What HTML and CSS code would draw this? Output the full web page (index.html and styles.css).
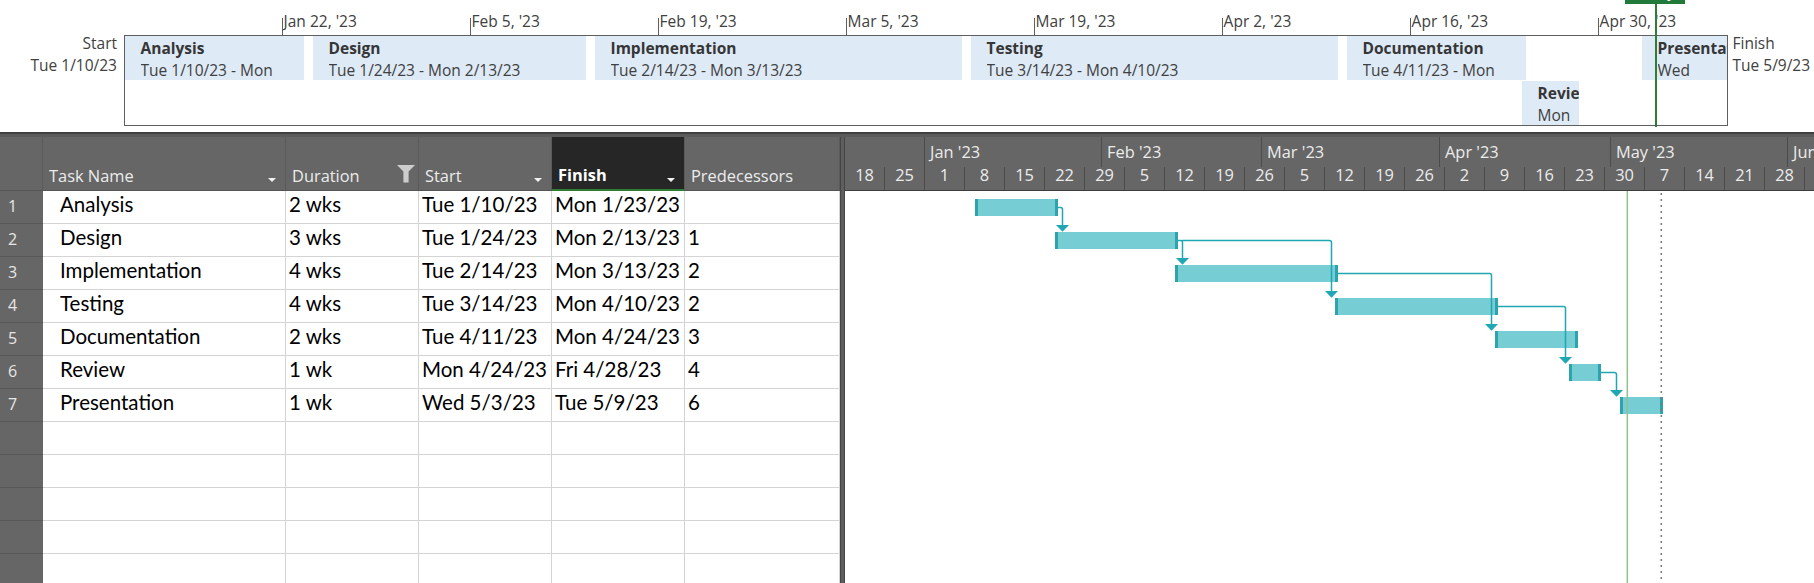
FILE: index.html
```html
<!DOCTYPE html>
<html lang="en">
<head>
<meta charset="utf-8">
<title>Project Gantt</title>
<link rel="stylesheet" href="styles.css">
</head>
<body>
<div class="app">
  <section class="timeline">
    <div class="tl-side tl-left"><div>Start</div><div>Tue 1/10/23</div></div>
    <div class="tl-box">
      <div class="tick" style="left:156.6px"><span>Jan 22, '23</span></div>
      <div class="tick" style="left:344.6px"><span>Feb 5, '23</span></div>
      <div class="tick" style="left:532.6px"><span>Feb 19, '23</span></div>
      <div class="tick" style="left:720.6px"><span>Mar 5, '23</span></div>
      <div class="tick" style="left:908.6px"><span>Mar 19, '23</span></div>
      <div class="tick" style="left:1096.6px"><span>Apr 2, '23</span></div>
      <div class="tick" style="left:1284.6px"><span>Apr 16, '23</span></div>
      <div class="tick" style="left:1472.6px"><span>Apr 30, '23</span></div>

      <div class="tl-block" style="left:0px;width:179px"><div class="tl-title">Analysis</div><div class="tl-dates">Tue 1/10/23 - Mon 1/23/23</div></div>
      <div class="tl-block" style="left:188px;width:273px"><div class="tl-title">Design</div><div class="tl-dates">Tue 1/24/23 - Mon 2/13/23</div></div>
      <div class="tl-block" style="left:470px;width:367px"><div class="tl-title">Implementation</div><div class="tl-dates">Tue 2/14/23 - Mon 3/13/23</div></div>
      <div class="tl-block" style="left:846px;width:367px"><div class="tl-title">Testing</div><div class="tl-dates">Tue 3/14/23 - Mon 4/10/23</div></div>
      <div class="tl-block" style="left:1222px;width:179px"><div class="tl-title">Documentation</div><div class="tl-dates">Tue 4/11/23 - Mon 4/24/23</div></div>
      <div class="tl-block lower" style="left:1397px;width:57px"><div class="tl-title">Review</div><div class="tl-dates">Mon 4/24/23 - Fri 4/28/23</div></div>
      <div class="tl-block" style="left:1517px;width:85px"><div class="tl-title">Presentation</div><div class="tl-dates">Wed 5/3/23 - Tue 5/9/23</div></div>
    </div>
    <div class="tl-side tl-right"><div>Finish</div><div>Tue 5/9/23</div></div>
    <div class="tl-today"><div class="tl-flag">Today</div></div>
  </section>

  <div class="splitter"></div>

  <section class="main">
    <div class="grid">
      <div class="hc rn"></div>
      <div class="hc"><span class="label">Task Name</span><span class="arrow"></span></div>
      <div class="hc dur"><span class="label">Duration</span>
        <svg class="filter" width="18" height="18" viewBox="0 0 18 18"><path d="M0 0H18L11.6 6.6V17.6H6.4V6.6Z"/></svg>
      </div>
      <div class="hc"><span class="label">Start</span><span class="arrow"></span></div>
      <div class="hc active"><span class="label">Finish</span><span class="arrow"></span></div>
      <div class="hc"><span class="label">Predecessors</span></div>

      <div class="rnc">1</div><div class="c name">Analysis</div><div class="c">2 wks</div><div class="c">Tue 1/10/23</div><div class="c">Mon 1/23/23</div><div class="c"></div>
      <div class="rnc">2</div><div class="c name">Design</div><div class="c">3 wks</div><div class="c">Tue 1/24/23</div><div class="c">Mon 2/13/23</div><div class="c">1</div>
      <div class="rnc">3</div><div class="c name">Implementation</div><div class="c">4 wks</div><div class="c">Tue 2/14/23</div><div class="c">Mon 3/13/23</div><div class="c">2</div>
      <div class="rnc">4</div><div class="c name">Testing</div><div class="c">4 wks</div><div class="c">Tue 3/14/23</div><div class="c">Mon 4/10/23</div><div class="c">2</div>
      <div class="rnc">5</div><div class="c name">Documentation</div><div class="c">2 wks</div><div class="c">Tue 4/11/23</div><div class="c">Mon 4/24/23</div><div class="c">3</div>
      <div class="rnc">6</div><div class="c name">Review</div><div class="c">1 wk</div><div class="c">Mon 4/24/23</div><div class="c">Fri 4/28/23</div><div class="c">4</div>
      <div class="rnc">7</div><div class="c name">Presentation</div><div class="c">1 wk</div><div class="c">Wed 5/3/23</div><div class="c">Tue 5/9/23</div><div class="c">6</div>
      <div class="rnc"></div><div class="c name"></div><div class="c"></div><div class="c"></div><div class="c"></div><div class="c"></div>
      <div class="rnc"></div><div class="c name"></div><div class="c"></div><div class="c"></div><div class="c"></div><div class="c"></div>
      <div class="rnc"></div><div class="c name"></div><div class="c"></div><div class="c"></div><div class="c"></div><div class="c"></div>
      <div class="rnc"></div><div class="c name"></div><div class="c"></div><div class="c"></div><div class="c"></div><div class="c"></div>
      <div class="rnc"></div><div class="c name"></div><div class="c"></div><div class="c"></div><div class="c"></div><div class="c"></div>
    </div>

    <div class="divider"></div>

    <div class="gantt">
      <div class="g-head">
        <div class="g-months">
          <div style="width:80px"></div>
          <div style="width:177px">Jan '23</div>
          <div style="width:160px">Feb '23</div>
          <div style="width:178px">Mar '23</div>
          <div style="width:171px">Apr '23</div>
          <div style="width:177px">May '23</div>
          <div style="width:100px">Jun '23</div>
        </div>
        <div class="g-weeks">
          <div>18</div><div>25</div><div>1</div><div>8</div><div>15</div><div>22</div><div>29</div>
          <div>5</div><div>12</div><div>19</div><div>26</div>
          <div>5</div><div>12</div><div>19</div><div>26</div>
          <div>2</div><div>9</div><div>16</div><div>23</div>
          <div>30</div><div>7</div><div>14</div><div>21</div><div>28</div><div>4</div>
        </div>
      </div>
      <svg class="g-body" width="969" height="392" viewBox="0 0 969 392">
        <g>
          <rect class="bar" x="130" y="8" width="83" height="17"/>
          <rect class="cap" x="130" y="8" width="3" height="17"/><rect class="cap" x="210" y="8" width="3" height="17"/>
          <rect class="bar" x="210" y="41" width="123" height="17"/>
          <rect class="cap" x="210" y="41" width="3" height="17"/><rect class="cap" x="330" y="41" width="3" height="17"/>
          <rect class="bar" x="330" y="74" width="163" height="17"/>
          <rect class="cap" x="330" y="74" width="3" height="17"/><rect class="cap" x="490" y="74" width="3" height="17"/>
          <rect class="bar" x="490" y="107" width="163" height="17"/>
          <rect class="cap" x="490" y="107" width="3" height="17"/><rect class="cap" x="650" y="107" width="3" height="17"/>
          <rect class="bar" x="650" y="140" width="83" height="17"/>
          <rect class="cap" x="650" y="140" width="3" height="17"/><rect class="cap" x="730" y="140" width="3" height="17"/>
          <rect class="bar" x="724" y="173" width="32" height="17"/>
          <rect class="cap" x="724" y="173" width="3" height="17"/><rect class="cap" x="753" y="173" width="3" height="17"/>
          <rect class="bar" x="775" y="206" width="43" height="17"/>
          <rect class="cap" x="775" y="206" width="3" height="17"/><rect class="cap" x="815" y="206" width="3" height="17"/>
        </g>
        <g>
          <path class="link" d="M213 16.5H215.5Q217.5 16.5 217.5 18.5V34"/>
          <polygon class="head" points="211,34 224,34 217.5,40.7"/>
          <path class="link" d="M333 49.5H335.5Q337.5 49.5 337.5 51.5V67"/>
          <polygon class="head" points="331,67 344,67 337.5,73.7"/>
          <path class="link" d="M337 49.5H484.5Q486.5 49.5 486.5 51.5V100"/>
          <polygon class="head" points="480,100 493,100 486.5,106.7"/>
          <path class="link" d="M493 82.5H644.5Q646.5 82.5 646.5 84.5V133"/>
          <polygon class="head" points="640,133 653,133 646.5,139.7"/>
          <path class="link" d="M653 115.5H718.5Q720.5 115.5 720.5 117.5V166"/>
          <polygon class="head" points="714,166 727,166 720.5,172.7"/>
          <path class="link" d="M756 181.5H769.5Q771.5 181.5 771.5 183.5V199"/>
          <polygon class="head" points="765,199 778,199 771.5,205.7"/>
        </g>
        <line class="today" x1="782.3" y1="0" x2="782.3" y2="392"/>
        <line class="finish" x1="816.3" y1="2" x2="816.3" y2="392"/>
      </svg>
    </div>
  </section>
</div>
</body>
</html>
```

FILE: styles.css
```css
* { box-sizing: border-box; margin: 0; padding: 0; }

html, body {
  width: 1814px;
  height: 583px;
  overflow: hidden;
  background: #ffffff;
}

body {
  font-family: "Open Sans", "Noto Sans", sans-serif;
  color: #404040;
}

.app {
  display: flex;
  flex-direction: column;
  height: 583px;
}

/* ---------- Timeline ---------- */
.timeline {
  position: relative;
  display: flex;
  flex: none;
  height: 132px;
  font-size: 15.5px;
  color: #404040;
}

.tl-side {
  padding-top: 32px;
  line-height: 22px;
  white-space: nowrap;
}

.tl-left {
  width: 124px;
  flex: none;
  text-align: right;
  padding-right: 7px;
}

.tl-right {
  flex: 1;
  padding-left: 4.5px;
}

.tl-box {
  position: relative;
  flex: none;
  width: 1604px;
  height: 91px;
  margin-top: 35px;
  border: 1px solid #5f5f5f;
}

.tick {
  position: absolute;
  top: -25px;
  height: 24px;
}

.tick::before {
  content: "";
  position: absolute;
  left: 0;
  top: 7px;
  bottom: 0;
  width: 1px;
  background: #5f5f5f;
}

.tick span {
  display: block;
  padding-left: 2px;
  line-height: 20px;
  white-space: nowrap;
}

.tl-block {
  position: absolute;
  top: 0;
  height: 44px;
  background: #deeaf6;
  padding: 1px 0 0 15.5px;
  overflow: hidden;
}

.tl-block.lower {
  top: 45px;
}

.tl-title {
  font-weight: 700;
  line-height: 22px;
  white-space: nowrap;
  color: #363636;
}

.tl-dates {
  line-height: 22px;
  height: 22px;
  overflow: hidden;
}

.tl-today {
  position: absolute;
  left: 1654.5px;
  top: 0;
  width: 2px;
  height: 127px;
  background: #2f7d32;
}

.tl-flag {
  position: absolute;
  left: -29.5px;
  top: -16px;
  width: 60px;
  height: 20px;
  background: #217a3a;
  color: #ffffff;
  font-size: 13px;
  font-weight: 700;
  line-height: 18px;
  text-align: center;
}

/* ---------- Splitter ---------- */
.splitter {
  flex: none;
  height: 5px;
  border-top: 2px solid #404040;
  background: #5b5b5b;
}

/* ---------- Main area ---------- */
.main {
  display: flex;
  flex: 1;
  min-height: 0;
  overflow: hidden;
}

.grid {
  flex: none;
  width: 840px;
  display: grid;
  grid-template-columns: 43px 243px 133px 133px 133px 155px;
  grid-template-rows: 54px;
  grid-auto-rows: 33px;
  align-content: start;
}

.hc {
  display: flex;
  align-items: flex-end;
  background: #666666;
  color: #ececec;
  font-size: 16.4px;
  line-height: 22px;
  padding: 0 9.5px 3px 6px;
  border-right: 1px solid #5a5a5a;
  border-bottom: 1px solid #555555;
}

.hc .label {
  flex: 1;
  white-space: nowrap;
  overflow: hidden;
}

.hc.dur {
  padding-right: 3px;
}

.hc.active {
  background: #262626;
  color: #ffffff;
  font-weight: 700;
  border-bottom: 2px solid #2e7d32;
}

.arrow {
  flex: none;
  width: 0;
  height: 0;
  border-left: 4.5px solid transparent;
  border-right: 4.5px solid transparent;
  border-top: 4.5px solid #f2f2f2;
  margin-bottom: 5px;
}

.hc.active .arrow {
  margin-bottom: 4px;
}

.filter {
  flex: none;
  margin-bottom: 4px;
  fill: #cdcdcd;
}

.rnc {
  background: #666666;
  color: #e6e6e6;
  font-size: 16px;
  line-height: 30px;
  padding-left: 8px;
  border-bottom: 1px solid #575757;
}

.c {
  font-family: Lato, "Liberation Sans", sans-serif;
  font-size: 20.5px;
  line-height: 27px;
  color: #000000;
  padding: 0 3px;
  white-space: nowrap;
  overflow: hidden;
  border-right: 1px solid #d4d4d4;
  border-bottom: 1px solid #d4d4d4;
}

.c.name {
  padding-left: 17px;
}

.divider {
  flex: none;
  width: 5px;
  background: #5e5e5e;
  border-left: 1px solid #454545;
  border-right: 1px solid #454545;
}

/* ---------- Gantt ---------- */
.gantt {
  flex: 1;
  min-width: 0;
  display: flex;
  flex-direction: column;
  overflow: hidden;
}

.g-head {
  flex: none;
  height: 54px;
  background: #666666;
  color: #ececec;
  font-size: 16.4px;
}

.g-months {
  display: flex;
  height: 30px;
  line-height: 30px;
}

.g-months div {
  flex: none;
  padding-left: 5px;
  white-space: nowrap;
  overflow: hidden;
  border-right: 1px solid #4b4b4b;
}

.g-weeks {
  display: flex;
  height: 24px;
  line-height: 16px;
  border-bottom: 1px solid #3d3d3d;
}

.g-weeks div {
  flex: none;
  width: 40px;
  text-align: center;
  border-right: 1px solid #4b4b4b;
}

.g-body {
  display: block;
  flex: none;
}

.bar { fill: #76cdd4; }
.cap { fill: #2ca3ad; }
.link { fill: none; stroke: #1fa8b3; stroke-width: 1.5; }
.head { fill: #1fa8b3; }
.today { stroke: #8fc28f; stroke-width: 1.5; }
.finish { stroke: #7a7a7a; stroke-width: 1.5; stroke-dasharray: 2 4; }
```
